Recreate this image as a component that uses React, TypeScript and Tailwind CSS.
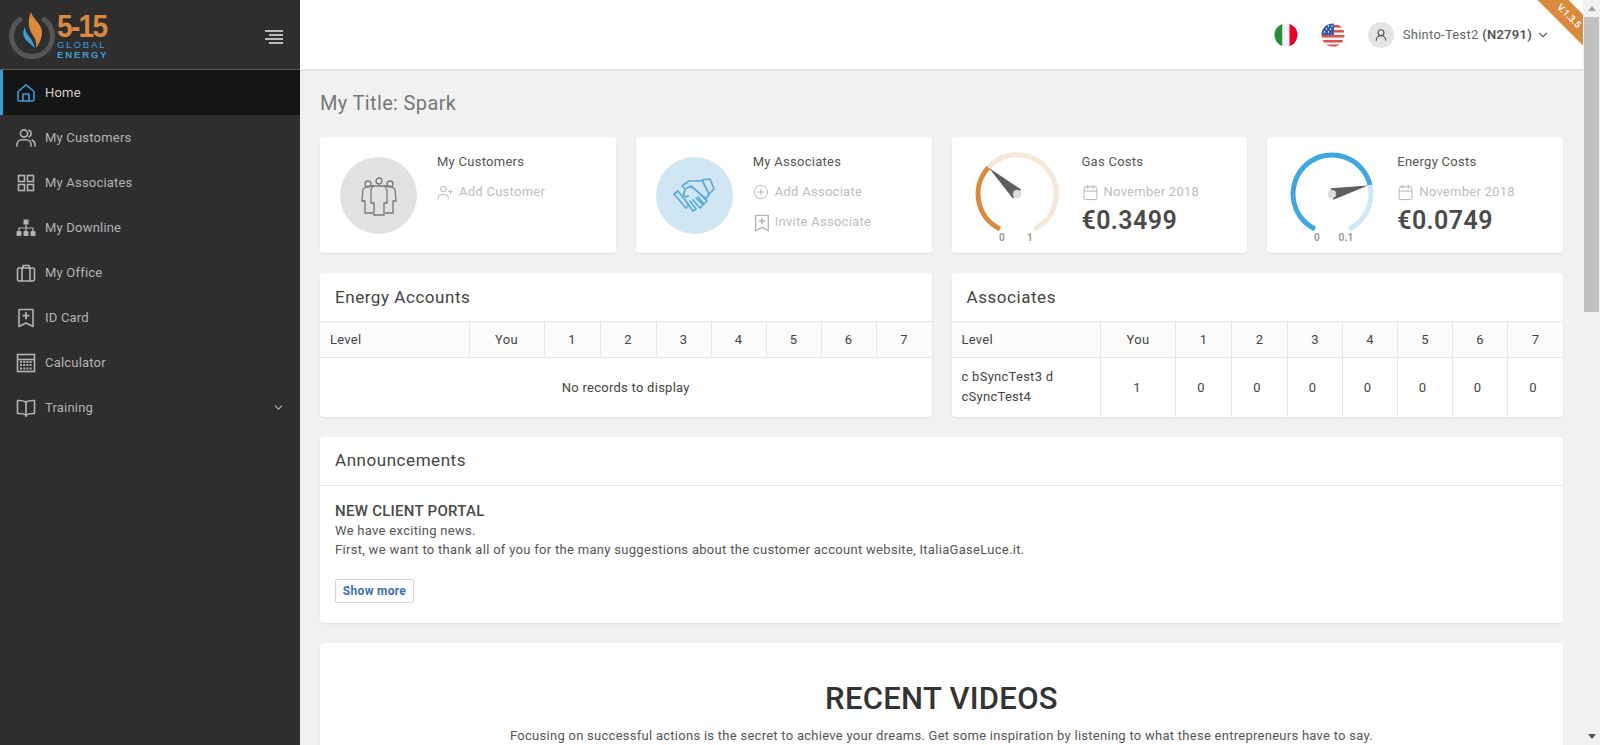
import React from 'react';
import { ChevronDown, UserPlus, CirclePlus, Calendar, UserRound } from 'lucide-react';

const stroke = { fill: 'none', stroke: 'currentColor', strokeWidth: 1.6, strokeLinecap: 'round', strokeLinejoin: 'round' } as const;

const HomeIcon = () => (
  <svg width="20" height="20" viewBox="0 0 20 20" {...stroke}>
    <path d="M2 8.500 10 1.800l8 6.700V17a1 1 0 0 1-1 1H3a1 1 0 0 1-1-1z" />
    <path d="M7 18v-7h6v7" />
  </svg>
);
const CustomersIcon = () => (
  <svg width="20" height="20" viewBox="0 0 20 20" {...stroke}>
    <circle cx="8" cy="5.500" r="3.600" />
    <path d="M1 18v-1.500A5 5 0 0 1 6 11.700h4a5 5 0 0 1 5 4.800V18" />
    <path d="M13 2.200a3.600 3.600 0 0 1 0 6.600M16 12a5 5 0 0 1 3 4.500V18" />
  </svg>
);
const GridIcon = () => (
  <svg width="20" height="20" viewBox="0 0 20 20" {...stroke} strokeLinejoin="miter">
    <rect x="2.500" y="2.500" width="6" height="6" />
    <rect x="11.500" y="2.500" width="6" height="6" />
    <rect x="2.500" y="11.500" width="6" height="6" />
    <rect x="11.500" y="11.500" width="6" height="6" />
  </svg>
);
const DownlineIcon = () => (
  <svg width="20" height="20" viewBox="0 0 20 20">
    <rect x="7.500" y="1.500" width="5" height="5" fill="currentColor" />
    <rect x="0.500" y="13" width="5" height="5" rx="1" fill="currentColor" />
    <rect x="7.500" y="13" width="5" height="5" rx="1" fill="currentColor" />
    <rect x="14.500" y="13" width="5" height="5" rx="1" fill="currentColor" />
    <path d="M10 6.500V13M3 13v-3h14v3" fill="none" stroke="currentColor" strokeWidth="1.200" />
  </svg>
);
const OfficeIcon = () => (
  <svg width="20" height="20" viewBox="0 0 20 20" {...stroke}>
    <rect x="1.500" y="5" width="17" height="13" rx="1.500" />
    <path d="M7 5V2.500h6V5M6 5v13M14 5v13" />
  </svg>
);
const BookmarkIcon = () => (
  <svg width="20" height="20" viewBox="0 0 20 20" {...stroke}>
    <path d="M3 1.500h14v17l-7-3.500-7 3.500z" />
    <path d="M10 5v5.500M7.500 7.700h5" strokeWidth="1.800" />
  </svg>
);
const CalculatorIcon = () => (
  <svg width="20" height="20" viewBox="0 0 20 20" {...stroke} strokeLinecap="butt" strokeLinejoin="miter">
    <rect x="1.500" y="1.500" width="17" height="17" />
    <path d="M1.500 6.500h17" />
    <path d="M4 9h12M4 12h12M4 15.500h12" strokeWidth="2" strokeDasharray="2 1.200" />
  </svg>
);
const BookIcon = () => (
  <svg width="20" height="20" viewBox="0 0 20 20" {...stroke}>
    <path d="M10 4C8 2.800 5 2.300 1.500 2.500v13c3.500-.2 6.500.3 8.500 1.500 2-1.200 5-1.700 8.500-1.500v-13C15 2.300 12 2.800 10 4z" />
    <path d="M10 4v14.500" />
  </svg>
);

const Logo = () => (
  <div className="flex items-start h-[69px] pl-[5px] pt-[10px]">
    <svg width="52" height="50" viewBox="0 0 52 50" className="shrink-0">
      <path d="M15 9.400a20.500 20.500 0 1 0 24 0" fill="none" stroke="#555" strokeWidth="5" strokeLinecap="round" />
      <path d="M26 2c1 6 11 12 11 20 0 7-3 12-6 16 1-6-1-10-4-14-3-5-5-13-1-22z" fill="#d98a3f" />
      <path d="M20 17c-3 5-2 10 2 14l8 7c-1-3-2-6-4-9-3-4-6-7-6-12z" fill="#3f9fdc" />
    </svg>
    <div className="flex flex-col leading-none font-['Liberation_Sans',sans-serif] tracking-normal">
      <span className="text-[#d98a3f] text-[32px] font-bold leading-[27px] tracking-[-2px] mt-[3px] origin-left scale-x-[0.88] whitespace-nowrap">5-15</span>
      <span className="text-[#3f9fdc] text-[9.500px] leading-[9px] tracking-[1.900px]">GLOBAL</span>
      <span className="text-[#3f9fdc] text-[9.500px] font-bold leading-[11px] tracking-[1.900px]">ENERGY</span>
    </div>
  </div>
);

const menu = [
  { label: 'My Customers', icon: <CustomersIcon /> },
  { label: 'My Associates', icon: <GridIcon /> },
  { label: 'My Downline', icon: <DownlineIcon /> },
  { label: 'My Office', icon: <OfficeIcon /> },
  { label: 'ID Card', icon: <BookmarkIcon /> },
  { label: 'Calculator', icon: <CalculatorIcon /> },
];

const Sidebar = () => (
  <aside className="w-[300px] shrink-0 bg-[#2e2e2e] text-[#b4b4b4] text-[13px] tracking-[0.200px]">
    <div className="relative h-[70px] border-b border-[#5a5a5a]">
      <Logo />
      <div className="absolute left-[265px] top-[30px] flex flex-col items-end gap-[2px]">
        <span className="block h-[2px] w-[18px] bg-[#bbb]" />
        <span className="block h-[2px] w-[14px] bg-[#bbb]" />
        <span className="block h-[2px] w-[18px] bg-[#bbb]" />
        <span className="block h-[2px] w-[14px] bg-[#bbb]" />
      </div>
    </div>
    <div className="h-[45px] flex items-center bg-[#151515] border-l-[3px] border-[#3a9bd5] pl-[13px] text-[#d0d0d0]">
      <span className="w-[29px] text-[#3a9bd5]"><HomeIcon /></span>
      Home
    </div>
    {menu.map((m) => (
      <div key={m.label} className="h-[45px] flex items-center pl-[16px]">
        <span className="w-[29px]">{m.icon}</span>
        {m.label}
      </div>
    ))}
    <div className="h-[45px] flex items-center pl-[16px] pr-[15px]">
      <span className="w-[29px]"><BookIcon /></span>
      <span className="flex-1">Training</span>
      <ChevronDown size={13} />
    </div>
  </aside>
);

const ItalyFlag = () => (
  <svg width="24" height="24" viewBox="0 0 24 24">
    <defs><clipPath id="it"><circle cx="12" cy="12" r="11.500" /></clipPath></defs>
    <g clipPath="url(#it)">
      <rect width="8.500" height="24" fill="#2a8a3e" />
      <rect x="8.500" width="7" height="24" fill="#f2f2f2" />
      <rect x="15.500" width="8.500" height="24" fill="#e4002b" />
    </g>
  </svg>
);
const UsFlag = () => (
  <svg width="24" height="24" viewBox="0 0 24 24">
    <defs><clipPath id="us"><circle cx="12" cy="12" r="11.500" /></clipPath></defs>
    <g clipPath="url(#us)">
      <rect width="24" height="24" fill="#f4f4f4" />
      <rect y="2" width="24" height="2.500" fill="#d9524f" />
      <rect y="7" width="24" height="2.500" fill="#d9524f" />
      <rect y="12" width="24" height="2.500" fill="#d9524f" />
      <rect y="17" width="24" height="2.500" fill="#d9524f" />
      <rect y="21.500" width="24" height="2.500" fill="#d9524f" />
      <rect width="13" height="12" fill="#3b5ca8" />
      <path d="M3 3h1M7 3h1M10.500 3h1M5 6h1M9 6h1M3 9h1M7 9h1" stroke="#fff" strokeWidth="1.500" />
    </g>
  </svg>
);

const Header = () => (
  <header className="relative h-[71px] shrink-0 bg-white border-b-2 border-[#e2e2e2] flex items-center justify-end pr-[33px] text-[13px] text-[#666]">
    <ItalyFlag />
    <span className="ml-[23px]"><UsFlag /></span>
    <span className="ml-[23px] w-[26px] h-[26px] rounded-full bg-[#e4e4e4] flex items-center justify-center text-[#555]">
      <UserRound size={14} />
    </span>
    <span className="ml-[9px]">Shinto-Test2 <b className="font-semibold text-[#555]">(N2791)</b></span>
    <ChevronDown size={14} className="ml-[4px]" />
    <div className="absolute right-0 top-0 w-[45px] h-[45px] overflow-hidden">
      <div className="absolute left-[-9px] top-[4.500px] w-[80px] h-[22px] rotate-45 bg-[#d98a3f] text-white text-[9.500px] tracking-normal font-semibold leading-[22px] text-center">
        <span>V.1.3.5</span>
      </div>
    </div>
  </header>
);

const Card = ({ children, className = '' }: { children: React.ReactNode; className?: string }) => (
  <div className={`bg-white rounded-[4px] shadow-[0_1px_2px_rgba(0,0,0,0.08)] ${className}`}>{children}</div>
);

const LinkRow = ({ icon, text }: { icon: React.ReactNode; text: string }) => (
  <div className="h-[30px] flex items-center text-[#bdbdbd]">
    <span className="w-[22px] text-[#b5b5b5]">{icon}</span>
    {text}
  </div>
);

const PeopleIcon = () => (
  <svg width="38" height="40" viewBox="0 0 38 40" fill="none" stroke="#777" strokeWidth="1.300">
    <circle cx="8" cy="8" r="3" /><circle cx="19" cy="5" r="3" /><circle cx="30" cy="8" r="3" />
    <path d="M14 10c-3 0-6 0-8 1l-3 2 -1 12h3v12h8" />
    <path d="M24 10c3 0 6 0 8 1l3 2 1 12h-3v12h-8" />
    <path d="M13 10h12l2 4 0 13h-3v12h-10v-12h-3v-13z" />
  </svg>
);

const HandshakeIcon = () => (
  <svg width="42" height="40" viewBox="0 0 42 40" fill="none" stroke="#5aaad6" strokeWidth="1.700" strokeLinejoin="round" strokeLinecap="round">
    <path d="M1 18 13 32l3-3L5 15z" />
    <path d="M37 3 41 13 36 18 29 4z" />
    <path d="M29 5H16l-7 5 3 3 6-3 15 13 3-5" />
    <path d="M12 14c-3 5 0 8 3 6" />
    <path d="M14 27l6 8 3-2-6-8M20 24l7 8 3-3-7-7M25 21l6 7 3-3-6-6" />
  </svg>
);

const arc = (x1: number, y1: number, x2: number, y2: number, large: number) =>
  `M${x1} ${y1}A39 39 0 ${large} 1 ${x2} ${y2}`;

const Gauge = ({ end, color, light, max, tip }: { end: [number, number]; color: string; light: string; max: string; tip: [number, number] }) => {
  const large = end[0] > 0 ? 1 : 0;
  return (
    <svg width="90" height="100" viewBox="-45 -45 90 100" className="shrink-0">
      <path d={arc(end[0], end[1], 17, 35, end[0] > 0 ? 0 : 1)} fill="none" stroke={light} strokeWidth="5" />
      <path d={arc(-17, 35, end[0], end[1], large)} fill="none" stroke={color} strokeWidth="5" />
      <path d={`M${tip[0]} ${tip[1]}L${-tip[1] * 0.16} ${tip[0] * 0.16}L${tip[1] * 0.16} ${-tip[0] * 0.16}z`} fill="#5f5f5f" />
      <circle r="4" cx="0" cy="0" fill="#dcdcdc" stroke="#ccc" strokeWidth="0.500" />
      <text x="-15" y="47" textAnchor="middle" fontSize="10" fontWeight="700" fill="#999">0</text>
      <text x={max === '1' ? 13 : 14} y="47" textAnchor="middle" fontSize="10" fontWeight="700" fill="#999">{max}</text>
    </svg>
  );
};

const TopCards = () => (
  <div className="grid grid-cols-4 grid-rows-[116px] gap-x-[20px]">
    <Card className="flex pl-[20px] pt-[20px]">
      <div className="w-[77px] h-[77px] rounded-full bg-[#e1e1e1] flex items-center justify-center shrink-0"><PeopleIcon /></div>
      <div className="ml-[20px] -mt-[10px]">
        <div className="h-[30px] flex items-center text-[#555]">My Customers</div>
        <LinkRow icon={<UserPlus size={17} strokeWidth={1.400} />} text="Add Customer" />
      </div>
    </Card>
    <Card className="flex pl-[20px] pt-[20px]">
      <div className="w-[77px] h-[77px] rounded-full bg-[#d0e6f2] flex items-center justify-center shrink-0"><HandshakeIcon /></div>
      <div className="ml-[20px] -mt-[10px]">
        <div className="h-[30px] flex items-center text-[#555]">My Associates</div>
        <LinkRow icon={<CirclePlus size={16} strokeWidth={1.400} />} text="Add Associate" />
        <LinkRow icon={<span className="block w-[16px] h-[16px] scale-90 origin-top-left"><BookmarkIcon /></span>} text="Invite Associate" />
      </div>
    </Card>
    {[
      { title: 'Gas Costs', value: '€0.3499', color: '#d98a3f', light: '#f5e6d8', max: '1', end: [-28.700, -26.400] as [number, number], tip: [-28, -26] as [number, number] },
      { title: 'Energy Costs', value: '€0.0749', color: '#3fa6e0', light: '#cfe7f6', max: '0.1', end: [38, -9] as [number, number], tip: [36, -8.500] as [number, number] },
    ].map((g) => (
      <Card key={g.title} className="flex pl-[20px] pt-[12px]">
        <Gauge end={g.end} color={g.color} light={g.light} max={g.max} tip={g.tip} />
        <div className="ml-[20px] -mt-[2px]">
          <div className="h-[30px] flex items-center text-[#555]">{g.title}</div>
          <div className="h-[30px] flex items-center text-[#bdbdbd]">
            <Calendar size={17} strokeWidth={1.400} className="mr-[5px] text-[#b5b5b5]" />
            November 2018
          </div>
          <div className="text-[25px] font-semibold leading-[28px] tracking-[0.400px] text-[#4a4a4a]">{g.value}</div>
        </div>
      </Card>
    ))}
  </div>
);

const cols = ['You', '1', '2', '3', '4', '5', '6', '7'];

const LevelTable = ({ title, children }: { title: string; children: React.ReactNode }) => (
  <Card>
    <div className="h-[48px] px-[15px] pt-[1px] flex items-center text-[17px] tracking-[0.550px] text-[#444]">{title}</div>
    <table className="w-full table-fixed border-collapse text-[13px] text-[#444]">
      <colgroup>
        <col className="w-[149px]" />
        <col className="w-[75px]" />
        <col className="w-[56px]" />
        <col className="w-[56px]" />
        <col className="w-[55px]" />
        <col className="w-[55px]" />
        <col className="w-[55px]" />
        <col className="w-[55px]" />
      </colgroup>
      <thead>
        <tr className="h-[36px] bg-[#fbfbfb] border-y border-[#e6e6e6]">
          <th className="font-normal text-left pl-[10px]">Level</th>
          {cols.map((c) => <th key={c} className="font-normal border-l border-[#e6e6e6]">{c}</th>)}
        </tr>
      </thead>
      <tbody>{children}</tbody>
    </table>
  </Card>
);

const Content = () => (
  <main className="flex-1 overflow-hidden pl-[20px] pr-[20px] text-[13px] text-[#555]">
    <h1 className="h-[66px] pb-[3px] flex items-center text-[20px] tracking-[0.350px] text-[#777]">My Title: Spark</h1>
    <TopCards />
    <div className="grid grid-cols-2 gap-x-[20px] mt-[20px]">
      <LevelTable title="Energy Accounts">
        <tr className="h-[59px]"><td colSpan={9} className="text-center">No records to display</td></tr>
      </LevelTable>
      <LevelTable title="Associates">
        <tr className="h-[59px] text-center">
          <td className="text-left pl-[10px] leading-[20px]">c bSyncTest3 d<br />cSyncTest4</td>
          <td className="border-l border-[#e6e6e6] pr-[2px]">1</td>
          {[1, 2, 3, 4, 5, 6, 7].map((n) => <td key={n} className="border-l border-[#e6e6e6] pr-[5px]">0</td>)}
        </tr>
      </LevelTable>
    </div>
    <Card className="mt-[20px] h-[186px]">
      <div className="h-[49px] px-[15px] pt-[1px] flex items-center text-[17px] tracking-[0.550px] text-[#444] border-b border-[#e6e6e6]">Announcements</div>
      <div className="px-[15px] pt-[16px]">
        <div className="text-[15px] font-medium leading-[19px] text-[#484848]">NEW CLIENT PORTAL</div>
        <div className="leading-[19px] tracking-[0.300px]">We have exciting news.</div>
        <div className="leading-[19px] tracking-[0.300px]">First, we want to thank all of you for the many suggestions about the customer account website, ItaliaGaseLuce.it.</div>
        <button className="mt-[20px] h-[24px] w-[79px] rounded-[2px] border border-[#d5d5d5] text-[12px] font-bold tracking-[0.300px] text-[#3a70ad]">Show more</button>
      </div>
    </Card>
    <Card className="mt-[20px] h-[300px] text-center">
      <h2 className="pt-[37px] text-[31px] font-medium leading-[38px] tracking-[0.300px] text-[#333]">RECENT VIDEOS</h2>
      <p className="mt-[8px]">Focusing on successful actions is the secret to achieve your dreams. Get some inspiration by listening to what these entrepreneurs have to say.</p>
    </Card>
  </main>
);

const Scrollbar = () => (
  <div className="w-[17px] shrink-0 h-full bg-[#f1f1f1] flex flex-col items-center">
    <span className="mt-[6px] w-0 h-0 border-x-[4px] border-x-transparent border-b-[5px] border-b-[#a3a3a3]" />
    <span className="mt-[6px] h-[295px] w-[15px] bg-[#c1c1c1]" />
    <span className="mt-auto mb-[6px] w-0 h-0 border-x-[4px] border-x-transparent border-t-[5px] border-t-[#505050]" />
  </div>
);

export default function App() {
  return (
    <div className="flex h-[745px] w-[1600px] overflow-hidden bg-[#f1f1f1] font-[Roboto,sans-serif] tracking-[0.270px]">
      <Sidebar />
      <div className="flex-1 min-w-0 flex flex-col">
        <Header />
        <Content />
      </div>
      <Scrollbar />
    </div>
  );
}
